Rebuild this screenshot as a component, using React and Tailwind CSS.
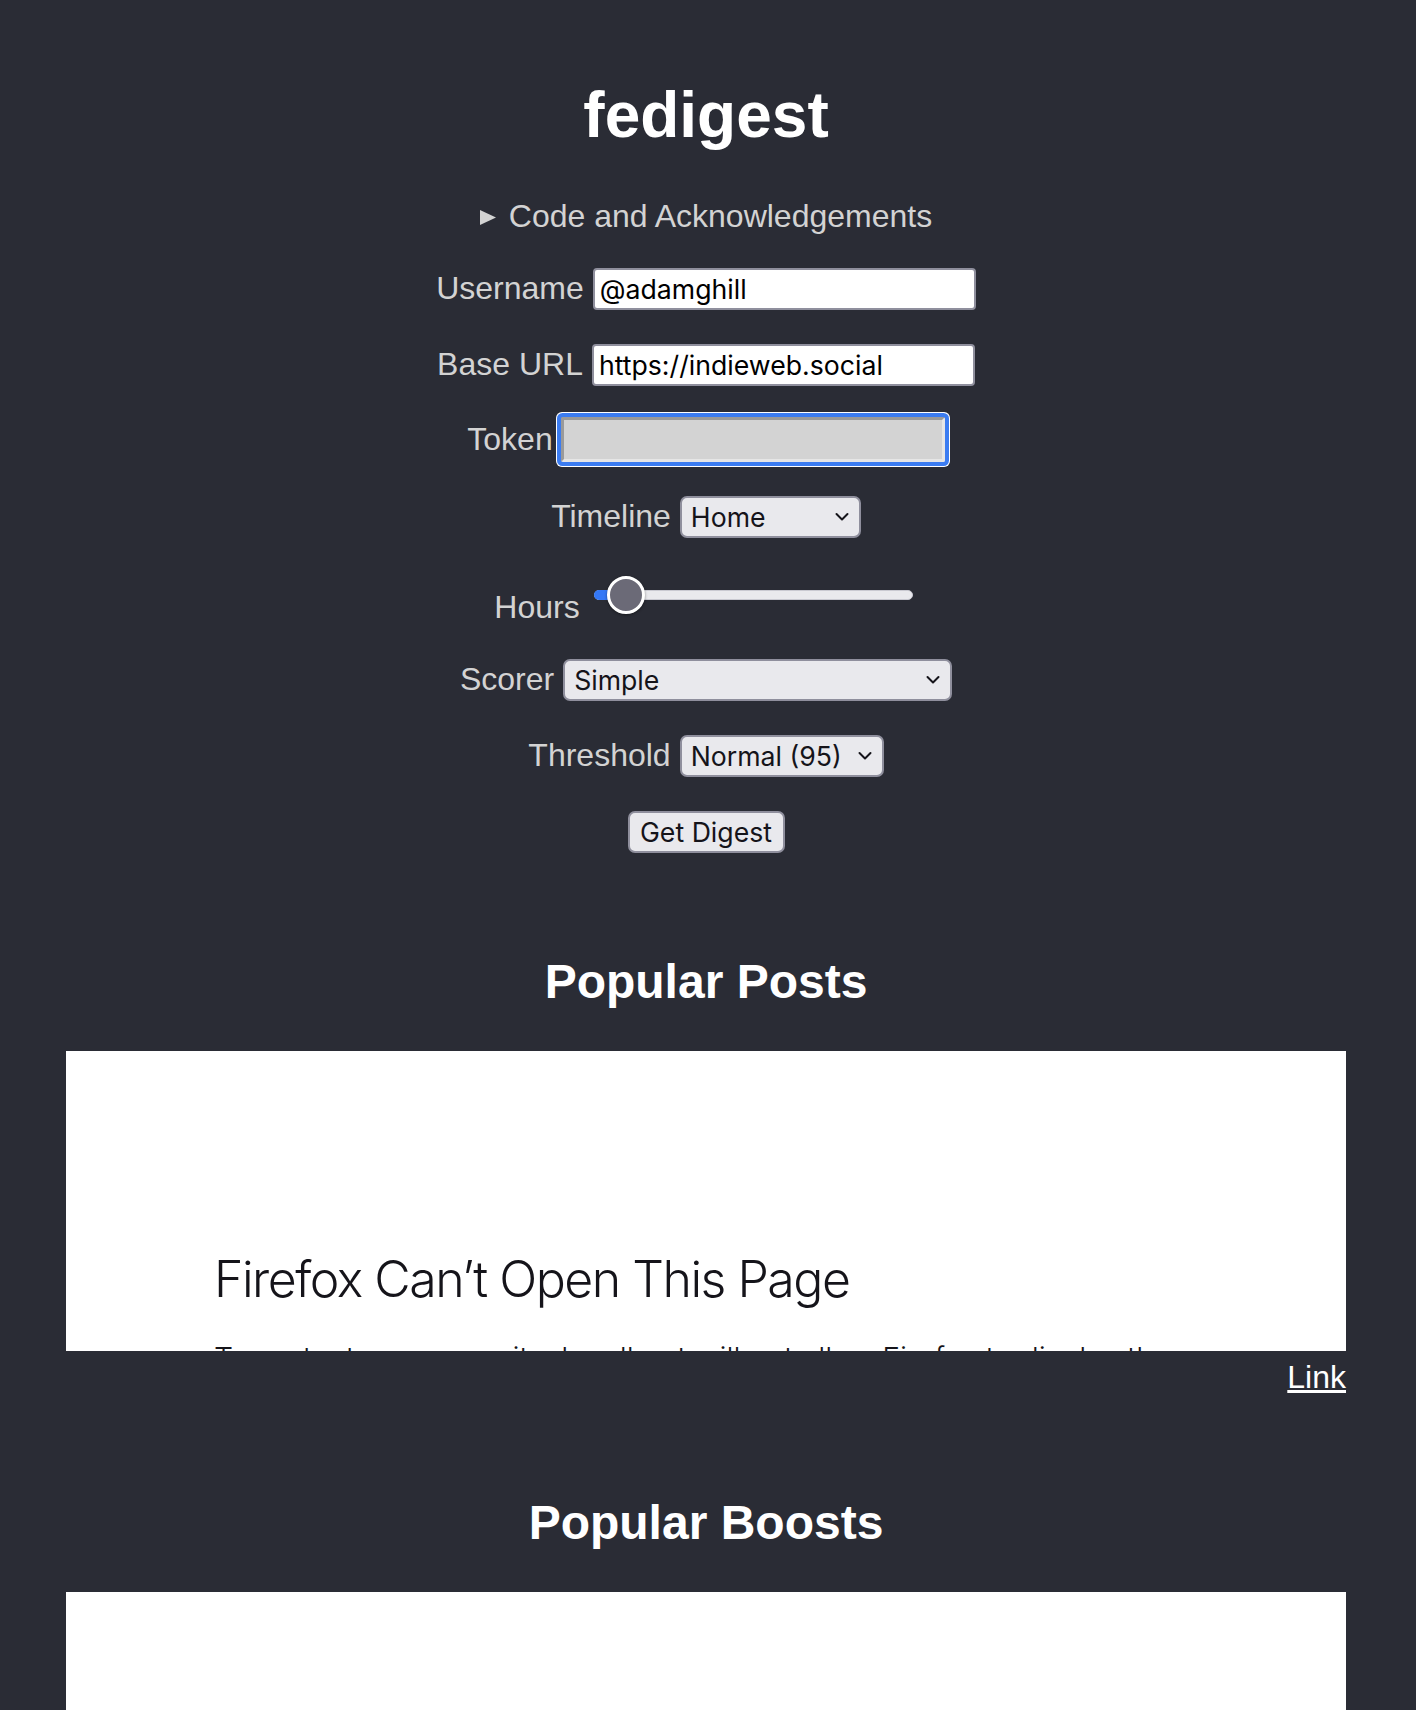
import React from 'react';

const inputFont = "font-['Inter','Noto_Sans',sans-serif]";

const Chevron = () => (
    <svg className="pointer-events-none absolute right-[12px] top-1/2 -translate-y-1/2" width="14" height="9" viewBox="0 0 14 9" fill="none">
        <path d="M1.5 1.5l5.5 5.5 5.5-5.5" stroke="#15141a" strokeWidth="2" strokeLinecap="round" strokeLinejoin="round" />
    </svg>
);

const Select = ({ width, value, options }) => (
    <div className={`relative ${width}`}>
        <select
            defaultValue={value}
            className={`h-[42px] w-full appearance-none rounded-[7px] border-2 border-[#8f8f9d] bg-[#e9e9ed] pl-[9px] pr-[36px] ${inputFont} text-[26.67px] text-[#15141a] outline-none`}
        >
            {options.map(o => <option key={o}>{o}</option>)}
        </select>
        <Chevron />
    </div>
);

const Row = ({ label, className, gap = 'gap-[9px]', children }) => (
    <div className={`flex items-baseline justify-center ${gap} ${className}`}>
        <label className="text-[#d3d3d3]">{label}</label>
        {children}
    </div>
);

// the embedded page that refuses to load inside the frame
const BlockedFrame = () => (
    <div className="h-[300px] w-full overflow-hidden bg-white pl-[148px] pt-[198px] font-['Inter','Noto_Sans',sans-serif] text-[#15141a]">
        <h3 className="text-[50px] font-light leading-[60px] tracking-[-0.03em]">Firefox Can’t Open This Page</h3>
        <p className="mt-[27px] max-w-[1000px] text-[30px] font-light leading-[45px]">
            To protect your security, localhost will not allow Firefox to display the page if another site has embedded it. To see this page, you need to open it in a new window.
        </p>
    </div>
);

const App = () => {
    return (
        <div className="h-[1710px] overflow-hidden bg-[#2a2c35] font-['Liberation_Sans',Arial,sans-serif] text-[32px] leading-[1.15] text-white">
            <div className="ml-[66px] w-[1280px] pt-[79px]">
                <h1 className="text-center text-[64px] font-bold leading-[1.15]">fedigest</h1>

                <div className="mt-[45px] flex items-center justify-center gap-[13px] text-[#d3d3d3]">
                    <svg width="16" height="15" viewBox="0 0 16 15" className="mt-[4px]">
                        <polygon points="0,0 16,7.5 0,15" fill="#d3d3d3" />
                    </svg>
                    <span>Code and Acknowledgements</span>
                </div>

                <Row label="Username" className="mt-[34px]">
                    <input
                        defaultValue="@adamghill"
                        className={`h-[42px] w-[383px] rounded-[4px] border-2 border-[#8f8f9d] bg-white pl-[5px] ${inputFont} text-[26.67px] text-black outline-none`}
                    />
                </Row>

                <Row label="Base URL" className="mt-[34px]">
                    <input
                        defaultValue="https://indieweb.social"
                        className={`h-[42px] w-[383px] rounded-[4px] border-2 border-[#8f8f9d] bg-white pl-[5px] ${inputFont} text-[26.67px] text-black outline-none`}
                    />
                </Row>

                <Row label="Token" gap="gap-[8px]" className="mt-[31px]">
                    <input
                        type="password"
                        className={`h-[45px] w-[384px] rounded-[2px] border-[3px] border-t-[#9a9a9a] border-l-[#9a9a9a] border-b-[#e6e6e6] border-r-[#e6e6e6] bg-[#d3d3d3] ${inputFont} text-[26.67px] shadow-[0_0_0_4px_#3b7cf1,0_0_0_5px_#ffffff] outline-none`}
                    />
                </Row>

                <Row label="Timeline" className="mt-[34px]">
                    <Select width="w-[181px]" value="Home" options={['Home', 'Local', 'Federated']} />
                </Row>

                <Row label="Hours" className="mt-[34px]">
                    <div className="relative h-[46px] w-[329px]">
                        <div className="absolute left-[5px] right-[5px] top-[18px] h-[10px] rounded-full border border-[#c9c9d1] bg-[#e9e9ed]" />
                        <div className="absolute left-[5px] top-[18px] h-[10px] w-[34px] rounded-full bg-[#3478f6]" />
                        <div className="absolute left-[18px] top-[4px] h-[38px] w-[38px] rounded-full border-[3px] border-white bg-[#6b6a77] shadow-[0_1px_3px_rgba(0,0,0,0.45)]" />
                    </div>
                </Row>

                <Row label="Scorer" className="mt-[33px]">
                    <Select width="w-[389px]" value="Simple" options={['Simple', 'Simple Weighted', 'Extended Simple', 'Extended Simple Weighted']} />
                </Row>

                <Row label="Threshold" className="mt-[34px]">
                    <Select width="w-[204px]" value="Normal (95)" options={['Lax (90)', 'Normal (95)', 'Strict (98)']} />
                </Row>

                <div className="mt-[34px] flex justify-center">
                    <button className={`h-[42px] w-[157px] rounded-[7px] border-2 border-[#8f8f9d] bg-[#e9e9ed] ${inputFont} text-[26.67px] text-[#15141a]`}>
                        Get Digest
                    </button>
                </div>

                <h2 className="mt-[101px] text-center text-[48px] font-bold leading-[1.15]">Popular Posts</h2>
                <div className="mt-[42px]">
                    <BlockedFrame />
                </div>
                <div className="mt-[8px] text-right">
                    <a href="#" className="text-white underline">Link</a>
                </div>

                <h2 className="mt-[99px] text-center text-[48px] font-bold leading-[1.15]">Popular Boosts</h2>
                <div className="mt-[42px]">
                    <BlockedFrame />
                </div>
                <div className="mt-[8px] text-right">
                    <a href="#" className="text-white underline">Link</a>
                </div>
            </div>
        </div>
    );
};

export default App;
